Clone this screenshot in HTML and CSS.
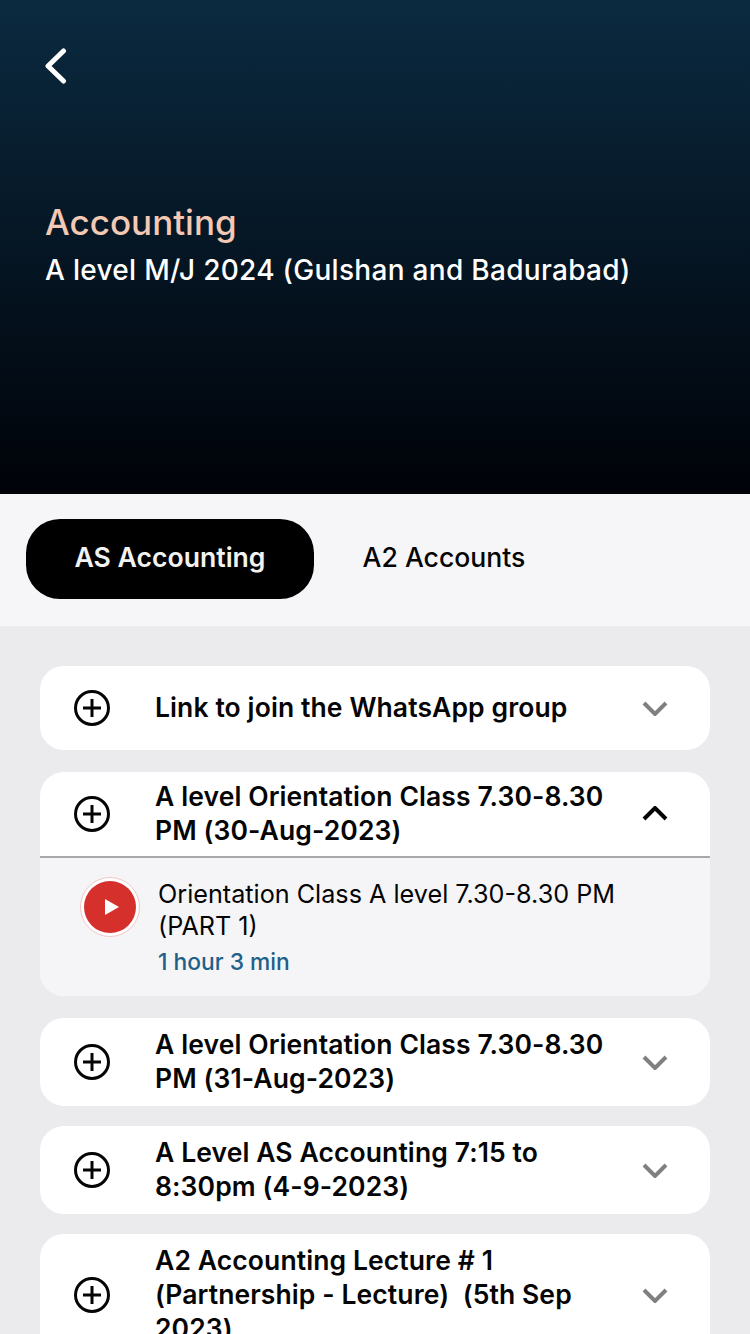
FILE: index.html
```html
<!DOCTYPE html>
<html lang="en">
<head>
    <meta charset="UTF-8">
    <meta name="viewport" content="width=device-width, initial-scale=1.0">
    <title>Accounting</title>
    <link rel="stylesheet" href="styles.css">
</head>
<body>
    <div class="screen">
        <header class="hero">
            <svg class="back" width="24" height="36" viewBox="0 0 24 36">
                <path d="M18.5 3 L3 18 L18.5 33" />
            </svg>
            <h1 class="subject">Accounting</h1>
            <p class="batch">A level M/J 2024 (Gulshan and Badurabad)</p>
        </header>

        <nav class="tabs">
            <div class="tab active">AS Accounting</div>
            <div class="tab">A2 Accounts</div>
        </nav>

        <main class="list">
            <section class="card single">
                <div class="card-head">
                    <svg class="plus" viewBox="0 0 36 36"><circle cx="18" cy="18" r="16.5" /><path d="M18 9 V27 M9 18 H27" /></svg>
                    <div class="card-title">Link to join the WhatsApp group</div>
                    <svg class="chevron" viewBox="0 0 26 16"><path d="M2 3 L13 14 L24 3" /></svg>
                </div>
            </section>

            <section class="card open">
                <div class="card-head">
                    <svg class="plus" viewBox="0 0 36 36"><circle cx="18" cy="18" r="16.5" /><path d="M18 9 V27 M9 18 H27" /></svg>
                    <div class="card-title">A level Orientation Class 7.30-8.30 PM (30-Aug-2023)</div>
                    <svg class="chevron up" viewBox="0 0 26 16"><path d="M2 13 L13 2 L24 13" /></svg>
                </div>
                <div class="lesson">
                    <div class="play"><span class="play-dot"><svg width="16" height="18" viewBox="0 0 16 18"><path d="M1 1 L15 9 L1 17 Z" /></svg></span></div>
                    <div>
                        <div class="lesson-title">Orientation Class A level 7.30-8.30 PM (PART 1)</div>
                        <div class="lesson-time">1 hour 3 min</div>
                    </div>
                </div>
            </section>

            <section class="card">
                <div class="card-head">
                    <svg class="plus" viewBox="0 0 36 36"><circle cx="18" cy="18" r="16.5" /><path d="M18 9 V27 M9 18 H27" /></svg>
                    <div class="card-title">A level Orientation Class 7.30-8.30 PM (31-Aug-2023)</div>
                    <svg class="chevron" viewBox="0 0 26 16"><path d="M2 3 L13 14 L24 3" /></svg>
                </div>
            </section>

            <section class="card">
                <div class="card-head">
                    <svg class="plus" viewBox="0 0 36 36"><circle cx="18" cy="18" r="16.5" /><path d="M18 9 V27 M9 18 H27" /></svg>
                    <div class="card-title">A Level AS Accounting 7:15 to 8:30pm (4-9-2023)</div>
                    <svg class="chevron" viewBox="0 0 26 16"><path d="M2 3 L13 14 L24 3" /></svg>
                </div>
            </section>

            <section class="card">
                <div class="card-head">
                    <svg class="plus" viewBox="0 0 36 36"><circle cx="18" cy="18" r="16.5" /><path d="M18 9 V27 M9 18 H27" /></svg>
                    <div class="card-title">A2 Accounting Lecture # 1 (Partnership - Lecture)&nbsp; (5th Sep 2023)</div>
                    <svg class="chevron" viewBox="0 0 26 16"><path d="M2 3 L13 14 L24 3" /></svg>
                </div>
            </section>
        </main>
    </div>
</body>
</html>
```

FILE: styles.css
```css
html, body {
    margin: 0;
    padding: 0;
    height: 1334px;
    overflow: hidden;
}

body {
    font-family: Inter, "Liberation Sans", sans-serif;
    background: #ebebed;
    color: #050505;
}

.screen {
    width: 750px;
    height: 1334px;
    overflow: hidden;
}

.hero {
    box-sizing: border-box;
    height: 494px;
    padding: 48px 45px 0;
    background: linear-gradient(180deg, #0b2a40 0%, #000208 100%);
}

.back {
    display: block;
    fill: none;
    stroke: #ffffff;
    stroke-width: 5;
    stroke-linecap: round;
    stroke-linejoin: round;
}

.subject {
    margin: 116px 0 0;
    font-size: 35px;
    line-height: 44px;
    font-weight: 500;
    color: #f3c9b3;
}

.batch {
    margin: 8px 0 0;
    font-size: 28px;
    line-height: 36px;
    letter-spacing: 0.3px;
    font-weight: 500;
    color: #ffffff;
}

.tabs {
    box-sizing: border-box;
    height: 132px;
    padding: 25px 26px 0;
    display: flex;
    background: #f6f6f8;
}

.tab {
    box-sizing: border-box;
    width: 260px;
    height: 80px;
    padding-bottom: 5px;
    border-radius: 34px;
    display: flex;
    align-items: center;
    justify-content: center;
    font-size: 26.6px;
    font-weight: 500;
}

.tab.active {
    width: 288px;
    background: #000000;
    color: #f2f2f2;
    font-weight: 600;
}

.list {
    padding: 40px 40px 0;
    display: flex;
    flex-direction: column;
    gap: 20px;
}

.card {
    background: #ffffff;
    border-radius: 24px;
    overflow: hidden;
    flex-shrink: 0;
}

.card.open {
    margin: 2px 0;
}

.card-head {
    box-sizing: border-box;
    min-height: 84px;
    padding: 10px 42px 10px 34px;
    display: flex;
    align-items: center;
}

.card.open .card-head {
    padding-top: 8px;
    padding-bottom: 8px;
}

.plus {
    width: 36px;
    height: 36px;
    flex-shrink: 0;
    fill: none;
    stroke: #050505;
    stroke-width: 3;
}

.card-title {
    flex: 1;
    margin: 0 36px 0 45px;
    position: relative;
    top: -1px;
    font-size: 26.5px;
    line-height: 34px;
    letter-spacing: 0.1px;
    font-weight: 600;
}

.chevron {
    width: 26px;
    height: 16px;
    flex-shrink: 0;
    fill: none;
    stroke: #808080;
    stroke-width: 4;
}

.chevron.up {
    stroke: #050505;
}

.lesson {
    box-sizing: border-box;
    height: 140px;
    padding: 19px 40px 0;
    display: flex;
    gap: 18px;
    background: #f5f5f8;
    border-top: 2px solid #a8a8a8;
}

.play {
    box-sizing: border-box;
    width: 60px;
    height: 60px;
    border-radius: 50%;
    border: 1px solid #f0c8c4;
    background: #ffffff;
    display: flex;
    align-items: center;
    justify-content: center;
    flex-shrink: 0;
}

.play-dot {
    box-sizing: border-box;
    width: 52px;
    height: 52px;
    padding-left: 3px;
    border-radius: 50%;
    background: #d5302c;
    display: flex;
    align-items: center;
    justify-content: center;
}

.play-dot svg {
    fill: #ffffff;
}

.lesson-title {
    margin-top: 1px;
    font-size: 25.2px;
    line-height: 32px;
    font-weight: 400;
}

.lesson-time {
    margin-top: 4px;
    font-size: 22.8px;
    line-height: 32px;
    font-weight: 500;
    color: #1f6088;
}
```
